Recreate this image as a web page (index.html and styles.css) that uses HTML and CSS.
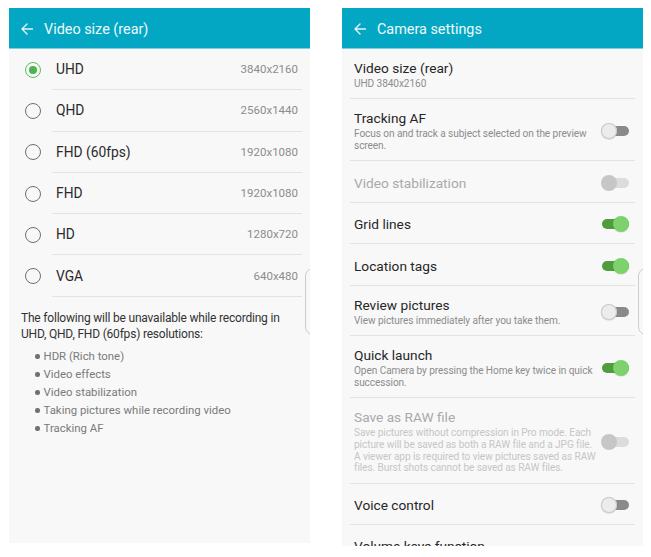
FILE: index.html
```html
<!DOCTYPE html>
<html lang="en">
<head>
<meta charset="utf-8">
<title>Video size / Camera settings</title>
<link rel="stylesheet" href="styles.css">
</head>
<body>
<div class="page">
  <section class="screen">
    <header class="appbar">
      <svg class="back" viewBox="0 0 12 12" aria-hidden="true"><path d="M11.5 6H1M6 1L1 6l5 5"/></svg>
      <h1>Video size (rear)</h1>
    </header>
    <ul class="options">
      <li class="option selected"><span class="radio"></span><div class="option-body"><span class="label">UHD</span><span class="value">3840x2160</span></div></li>
      <li class="option"><span class="radio"></span><div class="option-body"><span class="label">QHD</span><span class="value">2560x1440</span></div></li>
      <li class="option"><span class="radio"></span><div class="option-body"><span class="label">FHD (60fps)</span><span class="value">1920x1080</span></div></li>
      <li class="option"><span class="radio"></span><div class="option-body"><span class="label">FHD</span><span class="value">1920x1080</span></div></li>
      <li class="option"><span class="radio"></span><div class="option-body"><span class="label">HD</span><span class="value">1280x720</span></div></li>
      <li class="option"><span class="radio"></span><div class="option-body"><span class="label">VGA</span><span class="value">640x480</span></div></li>
    </ul>
    <p class="note">The following will be unavailable while recording in UHD, QHD, FHD (60fps) resolutions:</p>
    <ul class="bullets">
      <li>HDR (Rich tone)</li>
      <li>Video effects</li>
      <li>Video stabilization</li>
      <li>Taking pictures while recording video</li>
      <li>Tracking AF</li>
    </ul>
    <div class="edge-handle"></div>
  </section>

  <section class="screen screen-tall">
    <header class="appbar">
      <svg class="back" viewBox="0 0 12 12" aria-hidden="true"><path d="M11.5 6H1M6 1L1 6l5 5"/></svg>
      <h1>Camera settings</h1>
    </header>
    <ul class="settings">
      <li class="setting"><div class="text"><div class="title">Video size (rear)</div><div class="sub">UHD 3840x2160</div></div></li>
      <li class="setting"><div class="text"><div class="title">Tracking AF</div><div class="sub">Focus on and track a subject selected on the preview screen.</div></div><span class="switch"></span></li>
      <li class="setting disabled"><div class="text"><div class="title">Video stabilization</div></div><span class="switch"></span></li>
      <li class="setting"><div class="text"><div class="title">Grid lines</div></div><span class="switch on"></span></li>
      <li class="setting"><div class="text"><div class="title">Location tags</div></div><span class="switch on"></span></li>
      <li class="setting"><div class="text"><div class="title">Review pictures</div><div class="sub">View pictures immediately after you take them.</div></div><span class="switch"></span></li>
      <li class="setting"><div class="text"><div class="title">Quick launch</div><div class="sub">Open Camera by pressing the Home key twice in quick succession.</div></div><span class="switch on"></span></li>
      <li class="setting disabled"><div class="text"><div class="title">Save as RAW file</div><div class="sub">Save pictures without compression in Pro mode. Each picture will be saved as both a RAW file and a JPG file. A viewer app is required to view pictures saved as RAW files. Burst shots cannot be saved as RAW files.</div></div><span class="switch"></span></li>
      <li class="setting"><div class="text"><div class="title">Voice control</div></div><span class="switch"></span></li>
      <li class="setting"><div class="text"><div class="title">Volume keys function</div></div></li>
    </ul>
    <div class="edge-handle"></div>
  </section>
</div>
</body>
</html>
```

FILE: styles.css
```css
* { box-sizing: border-box; }

body {
  margin: 0;
  background: #ffffff;
  font-family: Roboto, "Noto Sans", "Liberation Sans", sans-serif;
  color: #1f1f1f;
}

.page {
  display: flex;
  align-items: flex-start;
  gap: 32px;
  padding: 8px 0 0 9px;
}

.screen {
  position: relative;
  width: 301px;
  height: 535px;
  background: #f8f8f8;
  overflow: hidden;
}

.screen-tall {
  height: 538px;
}

.appbar {
  height: 41px;
  background: #03a7c3;
  display: flex;
  align-items: center;
  padding-left: 12px;
  box-shadow: inset 0 -1px 0 #7fcfdd;
}

.back {
  width: 12px;
  height: 12px;
  margin-right: 11px;
  flex: none;
  fill: none;
  stroke: #e4f5f8;
  stroke-width: 1.4;
  stroke-linecap: round;
  stroke-linejoin: round;
}

.appbar h1 {
  margin: 0;
  font-size: 14.4px;
  font-weight: 400;
  color: #eef9fb;
  padding-top: 1px;
}

/* ---- radio options ---- */
.options {
  list-style: none;
  margin: 0;
  padding: 0;
}

.option {
  display: flex;
  height: 41.3px;
}

.radio {
  flex: none;
  width: 16px;
  height: 16px;
  margin: auto 11px auto 16px;
  border: 1.5px solid #6f6f6f;
  border-radius: 50%;
  display: flex;
  align-items: center;
  justify-content: center;
}

.selected .radio {
  border-color: #5cbf5c;
}

.selected .radio::after {
  content: "";
  width: 8px;
  height: 8px;
  border-radius: 50%;
  background: #4db34d;
}

.option-body {
  flex: 1;
  display: flex;
  align-items: center;
  justify-content: space-between;
  margin-right: 8px;
  padding: 0 4px;
  border-bottom: 1px solid #e3e3e3;
}

.label {
  font-size: 13.8px;
  color: #2a2a2a;
}

.value {
  font-size: 11.5px;
  color: #8c8c8c;
}

.note {
  margin: 13px 12px 0;
  font-size: 12px;
  letter-spacing: -0.2px;
  line-height: 16px;
  color: #333;
}

.bullets {
  list-style: none;
  margin: 5.7px 0 0;
  padding: 0 0 0 26px;
}

.bullets li {
  display: flex;
  align-items: center;
  gap: 4px;
  font-size: 11.4px;
  line-height: 18px;
  color: #7a7a7a;
}

.bullets li::before {
  content: "";
  width: 4.5px;
  height: 4.5px;
  border-radius: 50%;
  background: #707070;
  flex: none;
}

/* ---- settings list ---- */
.settings {
  list-style: none;
  margin: 0;
  padding: 0;
}

.setting {
  display: flex;
  align-items: center;
  gap: 2px;
  min-height: 41.5px;
  margin: 0 8px;
  padding: 11px 6px 8.5px 4px;
  border-bottom: 1px solid #e3e3e3;
}

.text {
  flex: 1;
  min-width: 0;
}

.title {
  font-size: 13.7px;
  line-height: 16.6px;
  color: #262626;
}

.sub {
  margin-top: 1.5px;
  font-size: 10.1px;
  letter-spacing: -0.08px;
  line-height: 11.7px;
  color: #8c8c8c;
}

.disabled .title { color: #a9a9a9; }
.disabled .sub { color: #c6c6c6; }

.switch {
  position: relative;
  flex: none;
  width: 28px;
  height: 16px;
}

.switch::before {
  content: "";
  position: absolute;
  left: 1px;
  right: 0;
  top: 3px;
  height: 10px;
  border-radius: 5px;
  background: #8a8a8a;
}

.switch::after {
  content: "";
  position: absolute;
  top: 0;
  left: 0;
  width: 16px;
  height: 16px;
  border-radius: 50%;
  background: #ececec;
  box-shadow: inset 0 0 0 1px #c9c9c9, 0 0.5px 1px rgba(0, 0, 0, 0.2);
}

.switch.on::before { background: #4f9d3e; }
.switch.on::after {
  left: 12px;
  background: #7ed26b;
  box-shadow: 0 0.5px 1px rgba(0, 0, 0, 0.15);
}

.disabled .switch::before { background: #dcdcdc; }
.disabled .switch::after {
  background: #c6c6c6;
  box-shadow: none;
}

/* edge panel handle */
.edge-handle {
  position: absolute;
  top: 260px;
  right: -12px;
  width: 17px;
  height: 67px;
  border: 1px solid #cdcdcd;
  border-radius: 8px;
}
```
